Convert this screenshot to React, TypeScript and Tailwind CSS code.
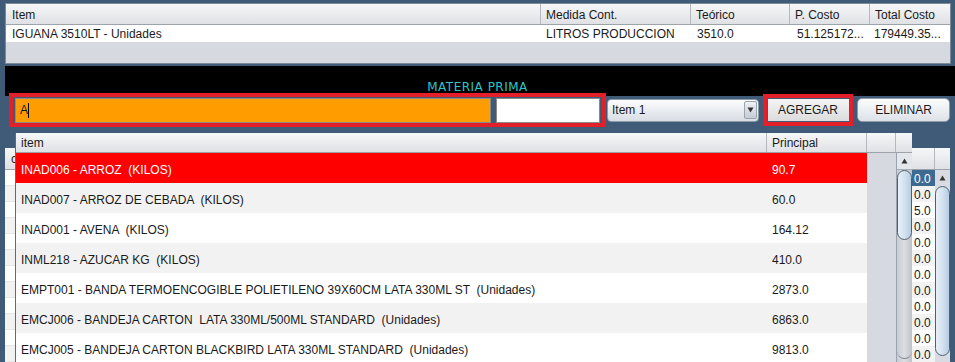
import React from "react";

const rows: [string, string][] = [
  ["INAD006 - ARROZ  (KILOS)", "90.7"],
  ["INAD007 - ARROZ DE CEBADA  (KILOS)", "60.0"],
  ["INAD001 - AVENA  (KILOS)", "164.12"],
  ["INML218 - AZUCAR KG  (KILOS)", "410.0"],
  ["EMPT001 - BANDA TERMOENCOGIBLE POLIETILENO 39X60CM LATA 330ML ST  (Unidades)", "2873.0"],
  ["EMCJ006 - BANDEJA CARTON  LATA 330ML/500ML STANDARD  (Unidades)", "6863.0"],
  ["EMCJ005 - BANDEJA CARTON BLACKBIRD LATA 330ML STANDARD  (Unidades)", "9813.0"],
];

const nums = ["0.0", "0.0", "5.0", "0.0", "0.0", "0.0", "0.0", "0.0", "0.0", "0.0", "0.0", "0.0"];

function UpArrow() {
  return (
    <svg width="7" height="6" viewBox="0 0 7 6">
      <path d="M3.5 0.5 L6.5 5.5 L0.5 5.5 Z" fill="#333" />
    </svg>
  );
}

export default function App() {
  return (
    <div className="relative w-[955px] h-[362px] overflow-hidden bg-[#3f5b78] font-['Liberation_Sans',Arial,sans-serif] text-[12px] text-[#1a1a1a] flex flex-col">
      {/* Top table */}
      <div className="ml-[5px] mt-[3px] w-[946px] h-[66px] border border-[#7d8b99] bg-[#d6d9df] flex flex-col">
        <div className="h-[21px] flex bg-gradient-to-b from-[#f6f7f8] to-[#dfe1e5] border-b border-[#9ca3ab]">
          <div className="w-[535px] border-r border-[#b4b8be] pl-[6px] pt-[1px] flex items-center">Item</div>
          <div className="w-[150px] border-r border-[#b4b8be] pl-[5px] pt-[1px] flex items-center">Medida Cont.</div>
          <div className="w-[99px] border-r border-[#b4b8be] pl-[5px] pt-[1px] flex items-center">Teórico</div>
          <div className="w-[80px] border-r border-[#b4b8be] pl-[5px] pt-[1px] flex items-center">P. Costo</div>
          <div className="flex-1 pl-[5px] pt-[1px] flex items-center">Total Costo</div>
        </div>
        <div className="h-[17px] flex bg-white">
          <div className="w-[535px] pl-[6px] flex items-center">IGUANA 3510LT - Unidades</div>
          <div className="w-[150px] pl-[5px] flex items-center">LITROS PRODUCCION</div>
          <div className="w-[99px] pl-[6px] flex items-center">3510.0</div>
          <div className="w-[80px] pl-[7px] flex items-center">51.125172...</div>
          <div className="flex-1 pl-[4px] flex items-center">179449.35...</div>
        </div>
      </div>

      {/* Black title band */}
      <div className="ml-[5px] mt-[2px] h-[30px] bg-black flex justify-center pt-[12px]">
        <span className="ml-[-5px] text-[#30c4c6] text-[12px] tracking-[0.5px] font-['Comic_Sans_MS','DejaVu_Sans',sans-serif]">
          MATERIA PRIMA
        </span>
      </div>

      {/* Toolbar */}
      <div className="relative z-10 -mt-[3px] h-[34px] flex items-center">
        <div className="ml-[9px] w-[597px] h-[34px] border-[4px] border-[#e3202a] flex items-center px-[2px] gap-[5px] bg-[#3f5b78]">
          <div className="w-[477px] h-[25px] bg-[#ff9d00] border border-[#8a8a8a] flex items-center pl-[4px]">
            <span>A</span>
            <span className="w-[1px] h-[15px] bg-black" />
          </div>
          <div className="w-[104px] h-[25px] bg-white border border-[#8a8a8a]" />
        </div>
        <div className="ml-[1px] w-[152px] h-[23px] rounded-[4px] border border-[#8e9aa6] bg-gradient-to-b from-[#fbfcfd] to-[#d9dee5] flex items-center justify-between pl-[4px] pr-[1px]">
          <span>Item 1</span>
          <span className="w-[13px] h-[18px] rounded-[2px] border border-[#9aa4ae] bg-gradient-to-b from-[#eef1f4] to-[#c5ccd4] flex items-center justify-center">
            <svg width="7" height="6" viewBox="0 0 7 6">
              <path d="M0.5 0.5 L6.5 0.5 L3.5 5.5 Z" fill="#333" />
            </svg>
          </span>
        </div>
        <div className="ml-[4px] w-[90px] h-[32px] border-[4px] border-[#e3202a] flex items-center justify-center bg-[#3f5b78]">
          <div className="w-[81px] h-[22px] bg-gradient-to-b from-[#f4f4f4] to-[#dcdcdc] flex items-center justify-center">AGREGAR</div>
        </div>
        <div className="ml-[4px] w-[93px] h-[24px] rounded-[5px] border border-[#8e9aa6] bg-gradient-to-b from-[#fbfcfd] to-[#dde2e8] flex items-center justify-center">
          ELIMINAR
        </div>
      </div>

      {/* Underlying table */}
      <div className="ml-[5px] mt-[21px] w-[945px] flex flex-col">
        <div className="h-[22px] flex bg-gradient-to-b from-[#f6f7f8] to-[#dfe1e5] border-b border-[#9ca3ab]">
          <div className="w-[907px] border-r border-[#b4b8be] pl-[6px] pt-[2px] text-[12px]">c</div>
          <div className="w-[23px] border-r border-[#b4b8be]" />
          <div className="w-[15px]" />
        </div>
        <div className="flex">
          <div className="w-[907px] flex flex-col">
            {nums.map((_, i) => (
              <div key={i} className={`h-[16px] border-b border-[#e6e6e6] ${i % 2 === 0 ? "bg-white" : "bg-[#f2f2f2]"}`} />
            ))}
          </div>
          <div className="w-[23px] flex flex-col">
            {nums.map((n, i) => (
              <div
                key={i}
                className={`h-[16px] pl-[2px] pt-[1px] flex items-center text-[12px] ${
                  i === 0 ? "bg-[#3d6a90] text-white" : i % 2 === 0 ? "bg-white" : "bg-[#f2f2f2]"
                }`}
              >
                {n}
              </div>
            ))}
          </div>
          <div className="w-[15px] flex flex-col bg-[#d8dce2]">
            <div className="h-[16px] flex items-center justify-center">
              <UpArrow />
            </div>
            <div className="h-[170px] rounded-[8px] border border-[#52606e] bg-gradient-to-r from-[#e8f0f8] via-[#d3e2f0] to-[#b7cde2]" />
          </div>
        </div>
      </div>

      {/* Popup list */}
      <div className="absolute left-[15px] top-[133px] w-[897px] bottom-0 border-l border-[#5f6b77] bg-[#d6d9df] flex flex-col">
        <div className="h-[20px] flex bg-gradient-to-b from-[#f6f7f8] to-[#dfe1e5] border-b border-[#9ca3ab]">
          <div className="w-[751px] border-r border-[#b4b8be] pl-[5px] pt-[1px] flex items-center">item</div>
          <div className="w-[100px] border-r border-[#b4b8be] pl-[5px] pt-[1px] flex items-center">Principal</div>
          <div className="w-[29px] border-r border-[#b4b8be]" />
          <div className="w-[16px]" />
        </div>
        <div className="flex flex-1">
          <div className="w-[851px] flex flex-col">
            {rows.map(([a, b], i) => (
              <div
                key={i}
                className={`h-[30px] pt-[4px] flex items-center whitespace-pre ${
                  i === 0 ? "bg-[#ff0000] text-white" : i % 2 === 1 ? "bg-[#f2f2f2]" : "bg-white"
                }`}
              >
                <div className="w-[751px] pl-[5px]">{a}</div>
                <div className="w-[100px] pl-[5px]">{b}</div>
              </div>
            ))}
          </div>
          <div className="w-[29px] bg-[#d6d9df]" />
          <div className="w-[16px] flex flex-col bg-gradient-to-r from-[#c9ccd1] via-[#dadde2] to-[#bfc3c9] border-l border-[#9aa3ad]">
            <div className="h-[17px] flex items-center justify-center bg-[#e3e7ec] border-b border-[#a4acb5]">
              <UpArrow />
            </div>
            <div className="h-[70px] rounded-[8px] border border-[#52606e] bg-gradient-to-r from-[#e8f0f8] via-[#d3e2f0] to-[#b7cde2]" />
            <div className="flex-1 rounded-b-[8px] mb-[4px] border-b border-[#7a8592]" />
          </div>
        </div>
      </div>
    </div>
  );
}
